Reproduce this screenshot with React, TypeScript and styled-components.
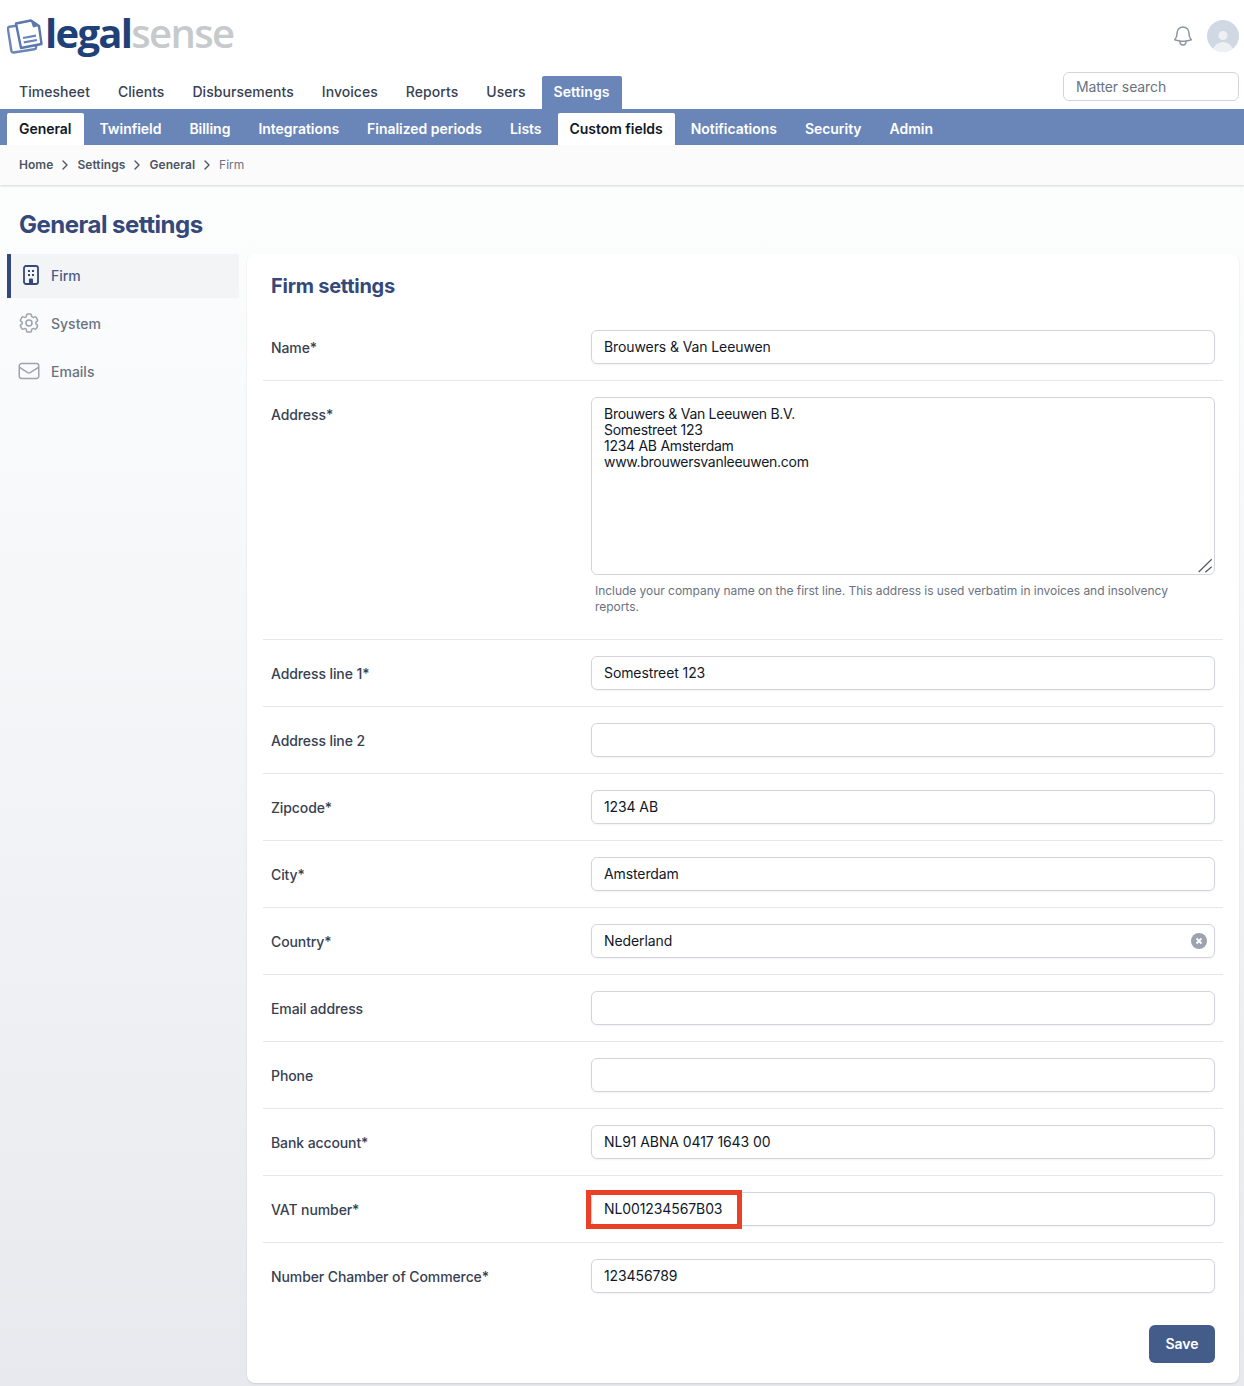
import React from "react";
import styled, { createGlobalStyle } from "styled-components";
import { HiOutlineBell, HiOutlineCog6Tooth, HiOutlineEnvelope } from "react-icons/hi2";
import { ChevronRight } from "lucide-react";

const Global = createGlobalStyle`
  * { box-sizing: border-box; }
  html, body { margin: 0; padding: 0; }
  body {
    font-family: Inter, "Liberation Sans", sans-serif;
    font-size: 14px;
    color: #374151;
    background: #fff;
    -webkit-font-smoothing: antialiased;
  }
`;

const Page = styled.div`
  width: 1244px;
  height: 1386px;
  overflow: hidden;
  background: linear-gradient(180deg, #ffffff 0%, #f9fafb 30%, #e8e9ee 100%);
`;
const TopBar = styled.header`
  height: 73px;
  padding: 15px 5px 0 7px;
  display: flex;
  justify-content: space-between;
  background: #fff;
`;
const Logo = styled.div`
  display: flex;
  align-items: flex-start;
  gap: 2px;
`;
const LogoText = styled.div`
  font-family: "Open Sans", sans-serif;
  font-weight: 700;
  font-size: 40px;
  line-height: 36px;
  letter-spacing: -1.7px;
  color: #1f4177;
  span { color: #c6cacd; font-weight: 600; }
`;
const TopIcons = styled.div`
  display: flex;
  align-items: center;
  gap: 12px;
  height: 42px;
`;
const Bell = styled(HiOutlineBell)`
  width: 24px;
  height: 24px;
  color: #8e95a3;
`;
const NavBar = styled.div`
  height: 36px;
  padding: 3px 5px 0 7px;
  display: flex;
  justify-content: space-between;
  align-items: flex-start;
  background: #fff;
`;
const NavTabs = styled.nav`
  display: flex;
  gap: 4px;
`;
const NavTab = styled.a<{ $active?: boolean }>`
  height: 33px;
  padding: 0 12px 3px;
  display: flex;
  align-items: center;
  font-weight: ${(p) => (p.$active ? 600 : 500)};
  font-size: 14px;
  letter-spacing: 0.05px;
  color: ${(p) => (p.$active ? "#fff" : "#374151")};
  background: ${(p) => (p.$active ? "#6a86b8" : "transparent")};
  border-radius: 2px 2px 0 0;
`;
const Search = styled.input`
  width: 176px;
  height: 29px;
  margin-top: -4px;
  padding: 0 12px;
  border: 1px solid #d1d5db;
  border-radius: 6px;
  font: 400 14px Inter, sans-serif;
  letter-spacing: -0.1px;
  background: #fff;
  outline: none;
  &::placeholder { color: #6b7280; opacity: 1; }
`;
const SubBar = styled.nav`
  height: 36px;
  padding: 4px 0 0 7px;
  display: flex;
  gap: 4px;
  background: #6a86b8;
`;
const SubTab = styled.a<{ $active?: boolean }>`
  height: 32px;
  padding: 0 12px 1px;
  display: flex;
  align-items: center;
  font-weight: 600;
  font-size: 14px;
  letter-spacing: -0.035px;
  color: ${(p) => (p.$active ? "#111827" : "#fff")};
  background: ${(p) => (p.$active ? "#fff" : "transparent")};
  border-radius: 2px 2px 0 0;
`;
const Crumbs = styled.div`
  height: 40px;
  padding: 0 0 1px 19px;
  display: flex;
  align-items: center;
  font-size: 12px;
  background: #fbfbfc;
  box-shadow: 0 1px 2px rgba(0, 0, 0, 0.16);
`;
const Crumb = styled.span<{ $last?: boolean }>`
  font-weight: ${(p) => (p.$last ? 400 : 600)};
  letter-spacing: ${(p) => (p.$last ? "0" : "0.06px")};
  color: ${(p) => (p.$last ? "#6b7280" : "#4b5563")};
`;
const Chevron = styled(ChevronRight)`
  width: 16px;
  height: 16px;
  margin: 0 4px;
  color: #4b5563;
`;
const Title = styled.h1`
  margin: 0;
  padding: 25px 0 14px 19px;
  font-size: 24px;
  line-height: 30px;
  font-weight: 700;
  letter-spacing: -0.5px;
  color: #34497a;
`;
const Body = styled.div`
  display: grid;
  grid-template-columns: 232px 992px;
  gap: 8px;
  padding-left: 7px;
`;
const Side = styled.aside`
  display: flex;
  flex-direction: column;
  gap: 4px;
`;
const SideItem = styled.a<{ $active?: boolean }>`
  height: 44px;
  padding: 0 0 2px ${(p) => (p.$active ? "8px" : "6px")};
  border-left: 4px solid ${(p) => (p.$active ? "#34497a" : "transparent")};
  display: flex;
  align-items: center;
  gap: ${(p) => (p.$active ? "8px" : "10px")};
  font-weight: 500;
  font-size: 14px;
  color: ${(p) => (p.$active ? "#4b5d85" : "#6b7280")};
  background: ${(p) => (p.$active ? "#f3f4f6" : "transparent")};
  svg { flex: none; width: 24px; height: 24px; color: #9ca3af; }
`;
const Card = styled.main`
  position: relative;
  height: 1129px;
  padding: 18px 16px 0;
  background: #fff;
  border-radius: 8px;
  box-shadow: 0 1px 2px rgba(0, 0, 0, 0.12);
`;
const CardTitle = styled.h2`
  margin: 0 0 14px 8px;
  font-size: 20px;
  line-height: 28px;
  font-weight: 700;
  letter-spacing: -0.25px;
  color: #34497a;
`;
const Row = styled.div<{ $last?: boolean }>`
  display: grid;
  grid-template-columns: 320px 624px;
  padding: 16px 8px;
  border-bottom: 1px solid ${(p) => (p.$last ? "transparent" : "#e5e7eb")};
`;
const Label = styled.label`
  padding-top: 8px;
  font-size: 14px;
  line-height: 20px;
  font-weight: 500;
  letter-spacing: -0.1px;
  color: #374151;
`;
const FieldWrap = styled.div`
  position: relative;
`;
const Input = styled.input`
  display: block;
  width: 100%;
  height: 34px;
  padding: 0 12px 2px;
  border: 1px solid #d1d5db;
  border-radius: 6px;
  font: 400 14px Inter, sans-serif;
  letter-spacing: -0.1px;
  color: #111827;
  background: #fff;
  outline: none;
  box-shadow: 0 1px 2px rgba(0, 0, 0, 0.05);
`;
const Area = styled.textarea`
  display: block;
  width: 100%;
  height: 178px;
  padding: 8px 12px;
  border: 1px solid #d1d5db;
  border-radius: 6px;
  font: 400 14px/16px Inter, sans-serif;
  letter-spacing: -0.28px;
  color: #111827;
  background: #fff;
  outline: none;
  resize: none;
`;
const Grip = styled.svg`
  position: absolute;
  right: 2px;
  top: 161px;
  width: 16px;
  height: 16px;
`;
const Hint = styled.p`
  margin: 8px 0 8px;
  padding: 0 4px;
  font-size: 12px;
  line-height: 16px;
  letter-spacing: -0.04px;
  color: #6b7280;
`;
const Clear = styled.svg`
  position: absolute;
  right: 8px;
  top: 9px;
  width: 16px;
  height: 16px;
`;
const Highlight = styled.div`
  position: absolute;
  left: 339px;
  top: 936px;
  width: 156px;
  height: 39px;
  border: 5px solid #ea4025;
  pointer-events: none;
`;
const Footer = styled.div`
  display: flex;
  justify-content: flex-end;
  padding: 15px 8px 0 0;
`;
const Save = styled.button`
  width: 66px;
  height: 38px;
  padding: 0 0 2px;
  border: 0;
  border-radius: 6px;
  background: #435c8a;
  color: #fff;
  font: 600 14px Inter, sans-serif;
`;

const LogoMark = () => (
  <svg width="36" height="38" viewBox="0 0 36 38" style={{ marginTop: 2 }}>
    <g fill="#fff" stroke="#6a86b8" strokeWidth="2.4" strokeLinejoin="round">
      <rect x="2.5" y="8" width="25" height="26" rx="2" transform="rotate(-9 15 21)" />
      <path d="M9 6.5 L24 3.5 L32 9 L34.500 27 L14 31 Z" stroke="#5a78ad" />
    </g>
    <path d="M24 4 L26 10.500 L32 9 Z" fill="#5a78ad" />
    <path d="M16 21 L29 18.600 M16.800 25.400 L30 23" stroke="#6a86b8" strokeWidth="2.2" fill="none" />
  </svg>
);
const Avatar = () => (
  <svg width="32" height="32" viewBox="0 0 32 32" style={{ display: "block" }}>
    <defs>
      <clipPath id="av"><circle cx="16" cy="16" r="16" /></clipPath>
    </defs>
    <g clipPath="url(#av)">
      <rect width="32" height="32" fill="#cfd8e3" />
      <circle cx="16" cy="15.500" r="4.500" fill="#eff0f2" />
      <ellipse cx="16" cy="31" rx="10" ry="9" fill="#eff0f2" />
    </g>
  </svg>
);
const FirmIcon = () => (
  <svg viewBox="0 0 24 24" fill="none">
    <rect x="5" y="3" width="14" height="18" rx="2" stroke="#34497a" strokeWidth="1.8" />
    <path d="M9 7h2v2H9zM13 7h2v2h-2zM9 11h2v2H9zM13 11h2v2h-2zM10 21v-4.500a1 1 0 0 1 1-1h2a1 1 0 0 1 1 1V21z" fill="#34497a" />
  </svg>
);

const mainTabs = ["Timesheet", "Clients", "Disbursements", "Invoices", "Reports", "Users", "Settings"];
const subTabs = ["General", "Twinfield", "Billing", "Integrations", "Finalized periods", "Lists", "Custom fields", "Notifications", "Security", "Admin"];
const activeSub = new Set(["General", "Custom fields"]);
const address = "Brouwers & Van Leeuwen B.V.\nSomestreet 123\n1234 AB Amsterdam\nwww.brouwersvanleeuwen.com";

const rowsAfter: { label: string; value: string; clear?: boolean }[] = [
  { label: "Address line 1*", value: "Somestreet 123" },
  { label: "Address line 2", value: "" },
  { label: "Zipcode*", value: "1234 AB" },
  { label: "City*", value: "Amsterdam" },
  { label: "Country*", value: "Nederland", clear: true },
  { label: "Email address", value: "" },
  { label: "Phone", value: "" },
  { label: "Bank account*", value: "NL91 ABNA 0417 1643 00" },
  { label: "VAT number*", value: "NL001234567B03" },
  { label: "Number Chamber of Commerce*", value: "123456789" },
];

export default function App() {
  return (
    <Page>
      <Global />
      <TopBar>
        <Logo>
          <LogoMark />
          <LogoText>legal<span>sense</span></LogoText>
        </Logo>
        <TopIcons>
          <Bell />
          <Avatar />
        </TopIcons>
      </TopBar>
      <NavBar>
        <NavTabs>
          {mainTabs.map((t) => (
            <NavTab key={t} $active={t === "Settings"}>{t}</NavTab>
          ))}
        </NavTabs>
        <Search placeholder="Matter search" />
      </NavBar>
      <SubBar>
        {subTabs.map((t) => (
          <SubTab key={t} $active={activeSub.has(t)}>{t}</SubTab>
        ))}
      </SubBar>
      <Crumbs>
        <Crumb>Home</Crumb><Chevron />
        <Crumb>Settings</Crumb><Chevron />
        <Crumb>General</Crumb><Chevron />
        <Crumb $last>Firm</Crumb>
      </Crumbs>
      <Title>General settings</Title>
      <Body>
        <Side>
          <SideItem $active><FirmIcon />Firm</SideItem>
          <SideItem><HiOutlineCog6Tooth />System</SideItem>
          <SideItem><HiOutlineEnvelope />Emails</SideItem>
        </Side>
        <Card>
          <CardTitle>Firm settings</CardTitle>
          <Row>
            <Label>Name*</Label>
            <FieldWrap><Input readOnly value="Brouwers & Van Leeuwen" /></FieldWrap>
          </Row>
          <Row>
            <Label>Address*</Label>
            <FieldWrap>
              <Area readOnly value={address} />
              <Grip viewBox="0 0 16 16">
                <path d="M1.700 14L14.700 1.300M8.300 14.300L14.700 8.700" stroke="#555a62" strokeWidth="1.200" fill="none" />
              </Grip>
              <Hint>Include your company name on the first line. This address is used verbatim in invoices and insolvency reports.</Hint>
            </FieldWrap>
          </Row>
          {rowsAfter.map((r, i) => (
            <Row key={r.label} $last={i === rowsAfter.length - 1}>
              <Label>{r.label}</Label>
              <FieldWrap>
                <Input readOnly value={r.value} />
                {r.clear && (
                  <Clear viewBox="0 0 16 16">
                    <circle cx="8" cy="8" r="8" fill="#9ca3af" />
                    <path d="M5.500 5.500l5 5M10.500 5.500l-5 5" stroke="#fff" strokeWidth="1.800" />
                  </Clear>
                )}
              </FieldWrap>
            </Row>
          ))}
          <Footer><Save>Save</Save></Footer>
          <Highlight />
        </Card>
      </Body>
    </Page>
  );
}
